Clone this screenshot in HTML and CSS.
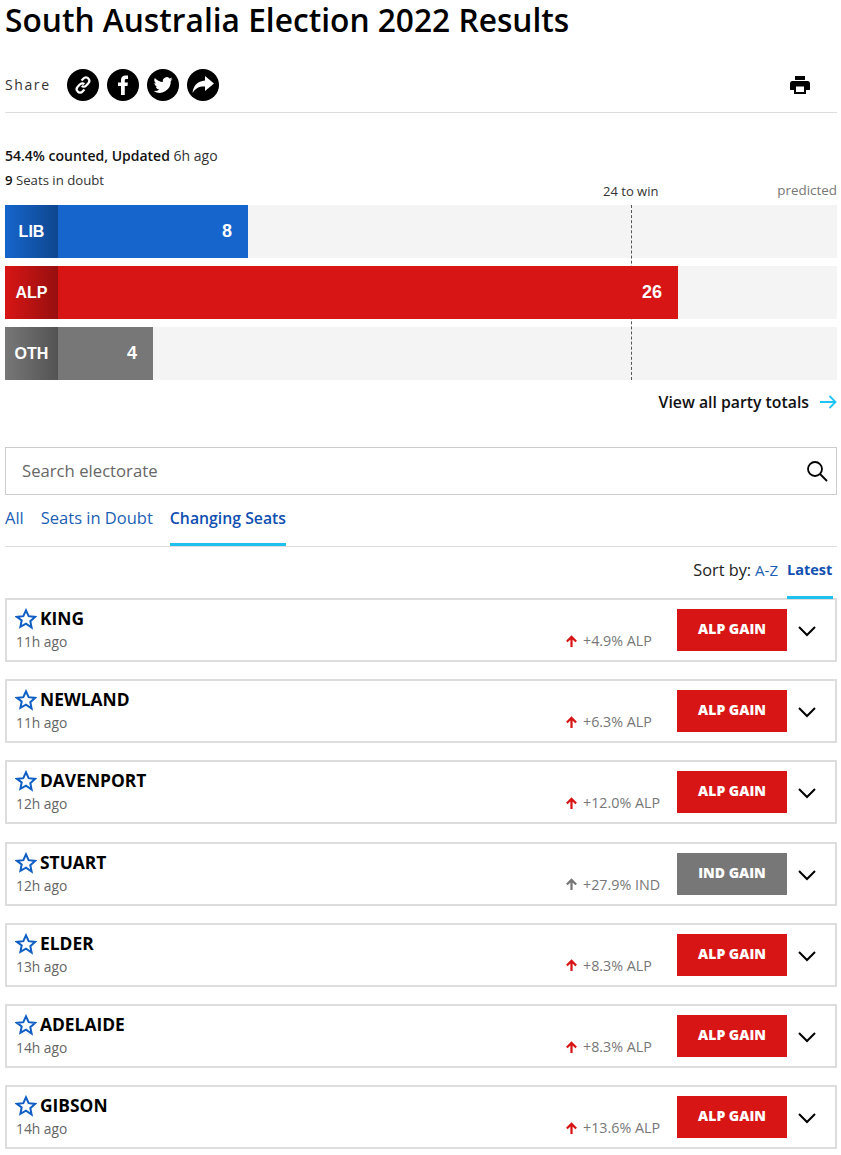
FILE: index.html
```html
<!DOCTYPE html>
<html>
<head>
  <title>South Australia Election 2022 Results</title>
  <link rel="stylesheet" href="styles.css">
</head>
<body>
  <svg class="icon-defs" width="0" height="0">
    <symbol id="star" viewBox="0 0 24 24"><path d="M12 2.5l2.9 6.4 7 .8-5.2 4.7 1.4 6.9L12 17l-6.100 3.500 1.400-6.900L2.100 9.700l7-.8z" fill="none" stroke="currentColor" stroke-width="2.200" stroke-linejoin="miter"/></symbol>
    <symbol id="up" viewBox="0 0 14 14"><path d="M7 13V2.500M2 7l5-5 5 5" fill="none" stroke="currentColor" stroke-width="2.400"/></symbol>
    <symbol id="chevron" viewBox="0 0 20 12"><path d="M2 2l8 8 8-8" fill="none" stroke="#000" stroke-width="2"/></symbol>
  </svg>

  <div class="container">
    <h1>South Australia Election 2022 Results</h1>

    <div class="share-row">
      <span class="share-label">Share</span>
      <a class="share-btn">
        <svg width="20" height="20" viewBox="0 0 20 20"><g fill="none" stroke="#fff" stroke-width="2.200"><path d="M8.500 5.500l2-2a3 3 0 0 1 4.800 0 3.300 3.300 0 0 1 .2 4.500l-2.500 2.700a3 3 0 0 1-4.300.2"/><path d="M11.500 14.500l-2 2a3 3 0 0 1-4.800 0 3.300 3.300 0 0 1-.2-4.500l2.500-2.700a3 3 0 0 1 4.300-.2"/></g></svg>
      </a>
      <a class="share-btn">
        <svg width="20" height="22" viewBox="0 0 20 22"><path d="M8 21v-9H5V8.500h3V6c0-3 1.700-4.600 4.400-4.600H15v3.500h-1.700c-1.200 0-1.500.6-1.500 1.500v2.100h3.100l-.4 3.500h-2.700v9z" fill="#fff"/></svg>
      </a>
      <a class="share-btn">
        <svg width="22" height="20" viewBox="0 0 24 24"><path d="M23.500 4.900c-.8.400-1.800.6-2.700.7 1-.6 1.700-1.500 2.100-2.600-.9.500-1.900.9-3 1.100a4.700 4.700 0 0 0-8 4.300C8 8.200 4.500 6.300 2.200 3.500c-1.300 2.200-.6 5 1.500 6.300-.8 0-1.500-.2-2.100-.6 0 2.300 1.600 4.300 3.800 4.700-.7.200-1.400.2-2.100.1.600 1.900 2.300 3.200 4.400 3.300A9.500 9.500 0 0 1 .700 19.200 13.400 13.400 0 0 0 21.300 7.300c.9-.7 1.700-1.500 2.200-2.400z" fill="#fff"/></svg>
      </a>
      <a class="share-btn">
        <svg width="24" height="20" viewBox="0 0 24 20"><path d="M14 1l9 7.500L14 16v-4.500C8.500 11.200 4.500 13 1.500 18c.6-7 5-12 12.500-12.500z" fill="#fff"/></svg>
      </a>
      <a class="print-btn">
        <svg width="20" height="18" viewBox="0 0 20 18"><path d="M5 0h10v4H5zM2.500 5h15A2.500 2.500 0 0 1 20 7.500V14h-4v4H4v-4H0V7.500A2.500 2.500 0 0 1 2.500 5zM6 10.500V16h8v-5.500z" fill="#000"/></svg>
      </a>
    </div>

    <p class="counted"><b>54.4% counted, Updated</b> 6h ago</p>
    <p class="doubt"><b>9</b> Seats in doubt</p>

    <div class="bar-labels">
      <span class="to-win">24 to win</span>
      <span class="predicted">predicted</span>
    </div>

    <div class="bars">
      <div class="win-line"></div>
      <div class="bar">
        <div class="fill lib" style="width: 29.2%"><span class="party">LIB</span><span class="seats">8</span></div>
      </div>
      <div class="bar">
        <div class="fill alp" style="width: 80.9%"><span class="party">ALP</span><span class="seats">26</span></div>
      </div>
      <div class="bar">
        <div class="fill oth" style="width: 17.8%"><span class="party">OTH</span><span class="seats">4</span></div>
      </div>
    </div>

    <div class="totals-link">
      <a>View all party totals</a>
      <svg width="18" height="14" viewBox="0 0 18 14"><path d="M1 7h15M10.500 1l6 6-6 6" fill="none" stroke="#20c4f4" stroke-width="1.800"/></svg>
    </div>

    <div class="search">
      <span>Search electorate</span>
      <svg width="22" height="22" viewBox="0 0 22 22"><circle cx="9" cy="9" r="7" fill="none" stroke="#000" stroke-width="1.800"/><path d="M14 14l7 7" stroke="#000" stroke-width="1.800"/></svg>
    </div>

    <div class="tabs">
      <a class="tab">All</a>
      <a class="tab">Seats in Doubt</a>
      <a class="tab active">Changing Seats</a>
    </div>

    <div class="sort">
      <span class="sort-label">Sort by:</span>
      <a class="sort-opt">A-Z</a>
      <a class="sort-opt active">Latest</a>
    </div>

    <div class="seat">
      <div class="seat-info">
        <div class="seat-name"><svg class="star"><use href="#star"/></svg>KING</div>
        <div class="seat-time">11h ago</div>
      </div>
      <div class="swing alp-swing"><svg><use href="#up"/></svg><span>+4.9% ALP</span></div>
      <div class="badge">ALP GAIN</div>
      <svg class="chevron"><use href="#chevron"/></svg>
    </div>

    <div class="seat">
      <div class="seat-info">
        <div class="seat-name"><svg class="star"><use href="#star"/></svg>NEWLAND</div>
        <div class="seat-time">11h ago</div>
      </div>
      <div class="swing alp-swing"><svg><use href="#up"/></svg><span>+6.3% ALP</span></div>
      <div class="badge">ALP GAIN</div>
      <svg class="chevron"><use href="#chevron"/></svg>
    </div>

    <div class="seat">
      <div class="seat-info">
        <div class="seat-name"><svg class="star"><use href="#star"/></svg>DAVENPORT</div>
        <div class="seat-time">12h ago</div>
      </div>
      <div class="swing alp-swing"><svg><use href="#up"/></svg><span>+12.0% ALP</span></div>
      <div class="badge">ALP GAIN</div>
      <svg class="chevron"><use href="#chevron"/></svg>
    </div>

    <div class="seat">
      <div class="seat-info">
        <div class="seat-name"><svg class="star"><use href="#star"/></svg>STUART</div>
        <div class="seat-time">12h ago</div>
      </div>
      <div class="swing ind-swing"><svg><use href="#up"/></svg><span>+27.9% IND</span></div>
      <div class="badge ind">IND GAIN</div>
      <svg class="chevron"><use href="#chevron"/></svg>
    </div>

    <div class="seat">
      <div class="seat-info">
        <div class="seat-name"><svg class="star"><use href="#star"/></svg>ELDER</div>
        <div class="seat-time">13h ago</div>
      </div>
      <div class="swing alp-swing"><svg><use href="#up"/></svg><span>+8.3% ALP</span></div>
      <div class="badge">ALP GAIN</div>
      <svg class="chevron"><use href="#chevron"/></svg>
    </div>

    <div class="seat">
      <div class="seat-info">
        <div class="seat-name"><svg class="star"><use href="#star"/></svg>ADELAIDE</div>
        <div class="seat-time">14h ago</div>
      </div>
      <div class="swing alp-swing"><svg><use href="#up"/></svg><span>+8.3% ALP</span></div>
      <div class="badge">ALP GAIN</div>
      <svg class="chevron"><use href="#chevron"/></svg>
    </div>

    <div class="seat">
      <div class="seat-info">
        <div class="seat-name"><svg class="star"><use href="#star"/></svg>GIBSON</div>
        <div class="seat-time">14h ago</div>
      </div>
      <div class="swing alp-swing"><svg><use href="#up"/></svg><span>+13.6% ALP</span></div>
      <div class="badge">ALP GAIN</div>
      <svg class="chevron"><use href="#chevron"/></svg>
    </div>
  </div>
</body>
</html>
```

FILE: styles.css
```css
* {
  box-sizing: border-box;
}

body {
  margin: 0;
  font-family: "Open Sans", Arial, sans-serif;
  color: #000;
  background-color: #fff;
}

.icon-defs {
  position: absolute;
}

.container {
  width: 837px;
  margin-left: 5px;
}

.container > * {
  width: 832px;
}

h1 {
  margin: 0;
  font-size: 31.700px;
  font-weight: 600;
  line-height: 40px;
}

.share-row {
  display: flex;
  align-items: center;
  gap: 8px;
  height: 73px;
  padding-top: 18px;
  border-bottom: 1px solid #ddd;
}

.share-label {
  width: 54px;
  margin-top: -2px;
  font-size: 14px;
  letter-spacing: 1.600px;
  color: #333;
}

.share-btn {
  display: flex;
  align-items: center;
  justify-content: center;
  width: 32px;
  height: 32px;
  border-radius: 50%;
  background-color: #000;
}

.print-btn {
  display: flex;
  margin-left: auto;
  margin-right: 27px;
}

.counted {
  margin: 33px 0 0;
  font-size: 14px;
  line-height: 20px;
  color: #333;
}

.counted b,
.doubt b {
  font-weight: 600;
  color: #111;
}

.doubt {
  margin: 5px 0 0;
  font-size: 13.200px;
  line-height: 18px;
  color: #333;
}

/* labels sit above the bars, the row itself only keeps the spacing */
.bar-labels {
  position: relative;
  height: 16px;
  font-size: 13px;
  line-height: 16px;
}

.to-win {
  position: absolute;
  left: 598px;
  top: -6px;
  color: #333;
}

.predicted {
  position: absolute;
  right: 0;
  top: -7px;
  font-size: 13.400px;
  color: #777;
}

.bars {
  position: relative;
  display: flex;
  flex-direction: column;
  gap: 8px;
}

.bar {
  height: 53px;
  background-color: #f4f4f4;
}

.win-line {
  position: absolute;
  top: 0;
  bottom: 0;
  left: 626px;
  border-left: 1px dashed #555;
}

.fill {
  position: relative;
  display: flex;
  align-items: center;
  justify-content: space-between;
  height: 100%;
  color: #fff;
  font-family: "Liberation Sans", Arial, sans-serif;
  font-weight: 700;
  font-size: 16px;
}

.party {
  display: flex;
  align-items: center;
  justify-content: center;
  width: 53px;
  height: 100%;
  background-image: linear-gradient(to right, rgba(0, 0, 0, 0), rgba(0, 0, 0, 0.3));
}

.seats {
  padding-right: 16px;
  font-size: 18px;
}

.lib {
  background-color: #1565cc;
}

.alp {
  background-color: #d81515;
}

.oth {
  background-color: #777;
}

.totals-link {
  display: flex;
  align-items: center;
  justify-content: flex-end;
  gap: 10px;
  height: 44px;
  font-size: 15.800px;
  font-weight: 600;
  color: #111;
}

.search {
  display: flex;
  align-items: center;
  justify-content: space-between;
  height: 48px;
  margin-top: 23px;
  padding: 0 8px 0 16px;
  border: 1px solid #ccc;
  font-size: 16.700px;
  color: #666;
}

.search span {
  margin-top: -2px;
}

.tabs {
  display: flex;
  gap: 17px;
  height: 52px;
  padding-top: 11px;
  border-bottom: 1px solid #ddd;
}

.tab {
  height: 40px;
  font-size: 16.500px;
  line-height: 24px;
  color: #1b5fb5;
}

.tab.active {
  border-bottom: 3px solid #1fc0ee;
  font-size: 15.800px;
  font-weight: 600;
  color: #0f4fb0;
}

.sort {
  display: flex;
  justify-content: flex-end;
  gap: 9px;
  height: 51.100px;
  padding: 11px 4px 0 0;
  font-size: 16.300px;
  line-height: 24px;
}

.sort-label {
  margin-right: -5px;
  color: #222;
}

.sort-opt {
  height: 41px;
  font-size: 15px;
  color: #1b5fb5;
}

.sort-opt.active {
  width: 46px;
  border-bottom: 3px solid #1fc0ee;
  font-size: 14.500px;
  font-weight: 700;
  color: #0f4fb0;
}

.seat {
  display: flex;
  align-items: flex-start;
  height: 64px;
  margin-bottom: 17.200px;
  padding: 7px 0 0 8px;
  border: 2px solid #ddd;
}

.seat:last-child {
  margin-bottom: 0;
}

.seat-info {
  flex: 1;
}

.seat-name {
  display: flex;
  align-items: center;
  gap: 3px;
  height: 22px;
  font-size: 17.400px;
  font-weight: 700;
}

.star {
  width: 22px;
  height: 22px;
  margin-top: 2px;
  color: #0f5fc4;
}

.seat-time {
  margin-top: 3px;
  padding-left: 1px;
  font-size: 13.800px;
  line-height: 20px;
  color: #666;
}

.swing {
  display: flex;
  align-items: center;
  gap: 5px;
  width: 112px;
  margin-top: 24px;
  font-size: 14.300px;
  line-height: 20px;
  color: #777;
}

.swing svg {
  width: 13px;
  height: 13px;
}

.alp-swing svg {
  color: #d81515;
}

.ind-swing svg {
  color: #777;
}

.badge {
  display: flex;
  align-items: center;
  justify-content: center;
  width: 110px;
  height: 42px;
  margin-top: 2px;
  padding-bottom: 3px;
  background-color: #d81515;
  color: #fff;
  font-size: 14px;
  font-weight: 800;
}

.badge.ind {
  background-color: #777;
}

.chevron {
  width: 20px;
  height: 12px;
  margin: 18px 18px 0 10px;
}
```
